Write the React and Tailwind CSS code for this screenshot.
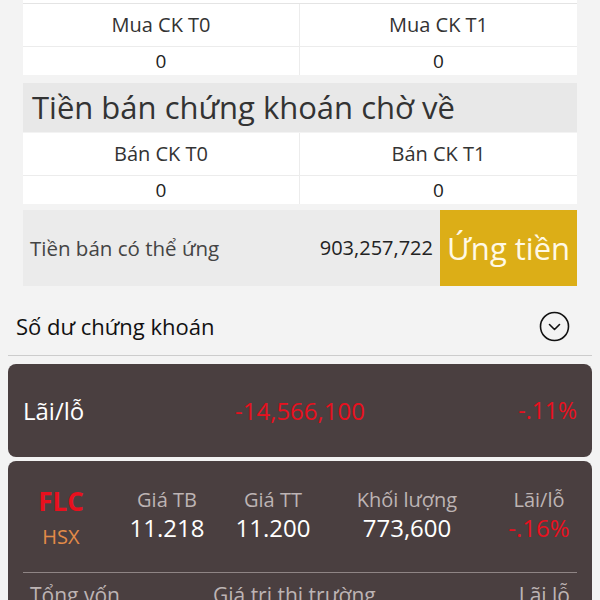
import React from 'react';

const font = { fontFamily: '"Open Sans", "Noto Sans", sans-serif' };

const PendingTable = ({ left, right }) => (
  <div className="mx-[15px] bg-white">
    <div className="grid grid-cols-2 border-b border-[#ececec]">
      <div className="h-[42px] flex items-center justify-center text-[20px] text-[#333] border-r border-[#ececec]">
        {left}
      </div>
      <div className="h-[42px] flex items-center justify-center text-[20px] text-[#333]">
        {right}
      </div>
    </div>
    <div className="grid grid-cols-2">
      <div className="h-[28px] flex items-center justify-center text-[19px] text-[#222] border-r border-[#ececec]">
        0
      </div>
      <div className="h-[28px] flex items-center justify-center text-[19px] text-[#222]">
        0
      </div>
    </div>
  </div>
);

const StockCol = ({ label, value, width, ml, red }) => (
  <div className={`${width} ${ml} flex flex-col items-center mt-[2px]`}>
    <div className="text-[20px] leading-[26px] text-[#bdb4b4] whitespace-nowrap">{label}</div>
    <div
      className={`text-[24px] leading-[30px] ${red ? 'text-[#e8101e]' : 'text-white'}`}
    >
      {value}
    </div>
  </div>
);

export default function App() {
  return (
    <div className="w-[600px] h-[600px] overflow-hidden bg-[#f3f3f3] px-[8px]" style={font}>
      {/* top leftover row */}
      <div className="mx-[15px] h-[4px] bg-white border-b border-[#e4e4e4]" />

      <PendingTable left="Mua CK T0" right="Mua CK T1" />

      <div className="mx-[15px] mt-[8px] h-[49px] bg-[#e8e8e8] flex items-center pl-[9px]">
        <span className="text-[31px] text-[#333] leading-none">
          Tiền bán chứng khoán chờ về
        </span>
      </div>

      <div className="mt-[1px]">
        <PendingTable left="Bán CK T0" right="Bán CK T1" />
      </div>

      {/* advance box */}
      <div className="mx-[15px] mt-[6px] h-[76px] bg-[#ebebeb] flex items-center">
        <div className="flex-1 pl-[7px] text-[20.5px] text-[#444]">Tiền bán có thể ứng</div>
        <div className="text-[20px] text-[#222] pr-[7px]">903,257,722</div>
        <button className="h-full w-[137px] bg-[#dcae17] text-[31px] text-[#fff9e6] flex items-center justify-center">
          Ứng tiền
        </button>
      </div>

      {/* holdings header */}
      <div className="h-[70px] pt-[12px] flex items-center justify-between pl-[8px] pr-[22px] border-b border-[#cccccc]">
        <span className="text-[22px] text-[#111]">Số dư chứng khoán</span>
        <svg width="31" height="31" viewBox="0 0 31 31" fill="none">
          <circle cx="15.5" cy="15.5" r="14" stroke="#111" strokeWidth="1.6" />
          <path d="M10.5 13.5 L15.5 18.5 L20.5 13.5" stroke="#111" strokeWidth="1.6" strokeLinecap="round" strokeLinejoin="round" />
        </svg>
      </div>

      {/* total P/L card */}
      <div className="mt-[8px] h-[93px] rounded-[8px] bg-[#4a3f40] px-[15px] grid grid-cols-3 items-center">
        <span className="text-[24px] text-white">Lãi/lỗ</span>
        <span className="text-[24px] text-[#e8101e] text-center">-14,566,100</span>
        <span className="text-[23px] text-[#e8101e] text-right">-.11%</span>
      </div>

      {/* stock card */}
      <div className="mt-[4px] h-[200px] rounded-[8px] bg-[#4a3f40] px-[15px] pt-[24px]">
        <div className="flex">
          <div className="w-[76px] flex flex-col items-center">
            <div className="text-[26px] leading-[32px] font-bold text-[#e8101e]">FLC</div>
            <div className="text-[20px] leading-[28px] mt-[6px] text-[#e38b48]">HSX</div>
          </div>
          <StockCol label="Giá TB" value="11.218" width="w-[76px]" ml="ml-[30px]" />
          <StockCol label="Giá TT" value="11.200" width="w-[76px]" ml="ml-[30px]" />
          <StockCol label="Khối lượng" value="773,600" width="w-[110px]" ml="ml-[41px]" />
          <StockCol label="Lãi/lỗ" value="-.16%" width="w-[76px]" ml="ml-[39px]" red />
        </div>
        <div className="mt-[21px] border-t border-[#8f8585]" />
        <div className="flex justify-between pt-[8px] px-[7px] text-[21px] leading-[28px] text-[#bdb4b4]">
          <span>Tổng vốn</span>
          <span className="mr-[50px]">Giá trị thị trường</span>
          <span>Lãi lỗ</span>
        </div>
      </div>
    </div>
  );
}
